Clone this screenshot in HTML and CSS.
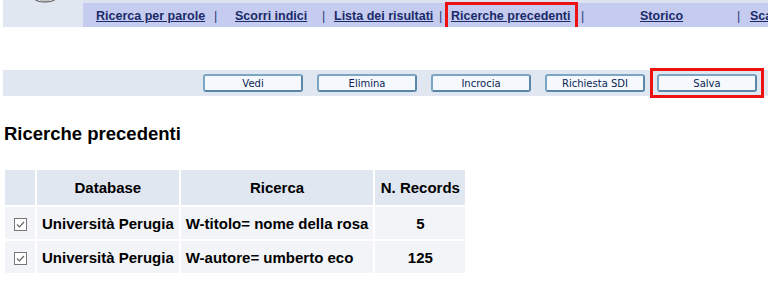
FILE: index.html
```html
<!DOCTYPE html>
<html lang="it">
<head>
  <meta charset="UTF-8">
  <title>Ricerche precedenti</title>
  <link rel="stylesheet" href="styles.css">
</head>
<body>

  <!-- Testata con menu -->
  <div class="top">
    <div class="logo-box">
      <svg class="logo" width="28" height="4" viewBox="0 0 28 4">
        <ellipse cx="14" cy="-3" rx="12" ry="5" fill="#fff" stroke="#444" stroke-width="1"/>
        <path d="M9 1h10" stroke="#888" stroke-width="1"/>
      </svg>
    </div>
    <div class="nav">
      <div class="nav-strip"></div>
      <div class="nav-links">
        <a class="l1" href="#">Ricerca per parole</a><span class="sep s1">|</span>
        <a class="l2" href="#">Scorri indici</a><span class="sep s2">|</span>
        <a class="l3" href="#">Lista dei risultati</a><span class="sep s3">|</span>
        <a class="l4 current" href="#">Ricerche precedenti</a><span class="sep s4">|</span>
        <a class="l5" href="#">Storico</a><span class="sep s5">|</span>
        <a class="l6" href="#">Scaffale</a>
      </div>
    </div>
  </div>

  <!-- Pulsanti -->
  <div class="toolbar">
    <button class="btn">Vedi</button>
    <button class="btn">Elimina</button>
    <button class="btn">Incrocia</button>
    <button class="btn">Richiesta SDI</button>
    <span class="btn-mark"><button class="btn">Salva</button></span>
  </div>

  <h1 class="title">Ricerche precedenti</h1>

  <table class="results">
    <tr>
      <th class="chk"></th>
      <th class="db">Database</th>
      <th class="q">Ricerca</th>
      <th class="n">N. Records</th>
    </tr>
    <tr>
      <td class="chk"><span class="box"><svg width="11" height="11" viewBox="0 0 11 11"><path d="M2 5.5l2.5 2.5 4.5-5" fill="none" stroke="#666" stroke-width="1.2"/></svg></span></td>
      <td>Università Perugia</td>
      <td>W-titolo= nome della rosa</td>
      <td class="n">5</td>
    </tr>
    <tr>
      <td class="chk"><span class="box"><svg width="11" height="11" viewBox="0 0 11 11"><path d="M2 5.5l2.5 2.5 4.5-5" fill="none" stroke="#666" stroke-width="1.2"/></svg></span></td>
      <td>Università Perugia</td>
      <td>W-autore= umberto eco</td>
      <td class="n">125</td>
    </tr>
  </table>

</body>
</html>
```

FILE: styles.css
```css
body {
  margin: 0;
  background-color: #ffffff;
  color: #000000;
  font-family: Arial, "Liberation Sans", sans-serif;
  overflow: hidden;
}

.top {
  display: flex;
  height: 27px;
  margin-left: 3px;
}

.logo-box {
  flex: 0 0 80px;
  background-color: #e1e7f0;
  position: relative;
}

.logo {
  position: absolute;
  left: 28px;
  top: 0;
}

.nav {
  flex: 1;
  display: flex;
  flex-direction: column;
  background-color: #c5ccef;
  overflow: hidden;
}

.nav-strip {
  height: 3px;
  background-color: #dde2f1;
}

.nav-links {
  position: relative;
  flex: 1;
  font-size: 12.5px;
  font-weight: bold;
  white-space: nowrap;
}

.nav-links a,
.nav-links .sep {
  position: absolute;
  top: 6px;
  color: #1a2a6a;
}

.nav-links a {
  text-decoration: underline;
}

.nav-links .sep {
  color: #2a3a7a;
  font-weight: normal;
}

/* posizioni fisse delle voci nel menu, come nella pagina originale */
.l1 { left: 13px; }
.s1 { left: 131px; }
.l2 { left: 152px; }
.s2 { left: 239px; }
.l3 { left: 251px; }
.s3 { left: 356px; }
.l4 { left: 368px; }
.s4 { left: 498px; }
.l5 { left: 557px; }
.s5 { left: 654px; }
.l6 { left: 667px; }

.nav-links a.current {
  outline: 3px solid #ee1111;
  padding: 4px 4px 5px 3px;
  top: 2px;
  left: 365px;
}

.toolbar {
  display: flex;
  justify-content: flex-end;
  align-items: center;
  gap: 14px;
  height: 26px;
  margin: 43px 0 0 3px;
  padding-right: 11px;
  background-color: #e1e7f0;
}

.btn {
  width: 100px;
  height: 18px;
  padding: 0;
  font-family: Tahoma, "DejaVu Sans", sans-serif;
  font-size: 10px;
  color: #0a1f55;
  background-color: #f5f8fc;
  border: 2px solid #5a87a8;
  border-top-color: #7aa6c4;
  border-left-color: #7aa6c4;
  border-radius: 3px;
}

.btn-mark {
  display: inline-block;
  padding: 3px 4px;
  border: 3px solid #ee1111;
  margin-left: -9px;
  margin-right: -7px;
  line-height: 0;
}

.title {
  font-size: 18.5px;
  font-weight: bold;
  margin: 27px 0 0 4px;
}

.results {
  margin: 23px 0 0 3px;
  border-spacing: 2px;
  font-size: 15px;
  font-weight: bold;
}

.results th {
  height: 35px;
  background-color: #e1e7f0;
  text-align: center;
  padding: 0 5px;
  white-space: nowrap;
}

.results td {
  height: 32px;
  background-color: #f2f4f8;
  padding: 0 5px;
  white-space: nowrap;
}

.results .chk {
  width: 30px;
  text-align: center;
  padding: 0;
}

.results .db { width: 131px; }
.results .q { width: 180px; }
.results .n { width: 90px; padding: 0; text-align: center; }

.box {
  display: inline-block;
  width: 11px;
  height: 11px;
  border: 1px solid #777;
  background-color: #fff;
  line-height: 0;
  vertical-align: middle;
}
```
